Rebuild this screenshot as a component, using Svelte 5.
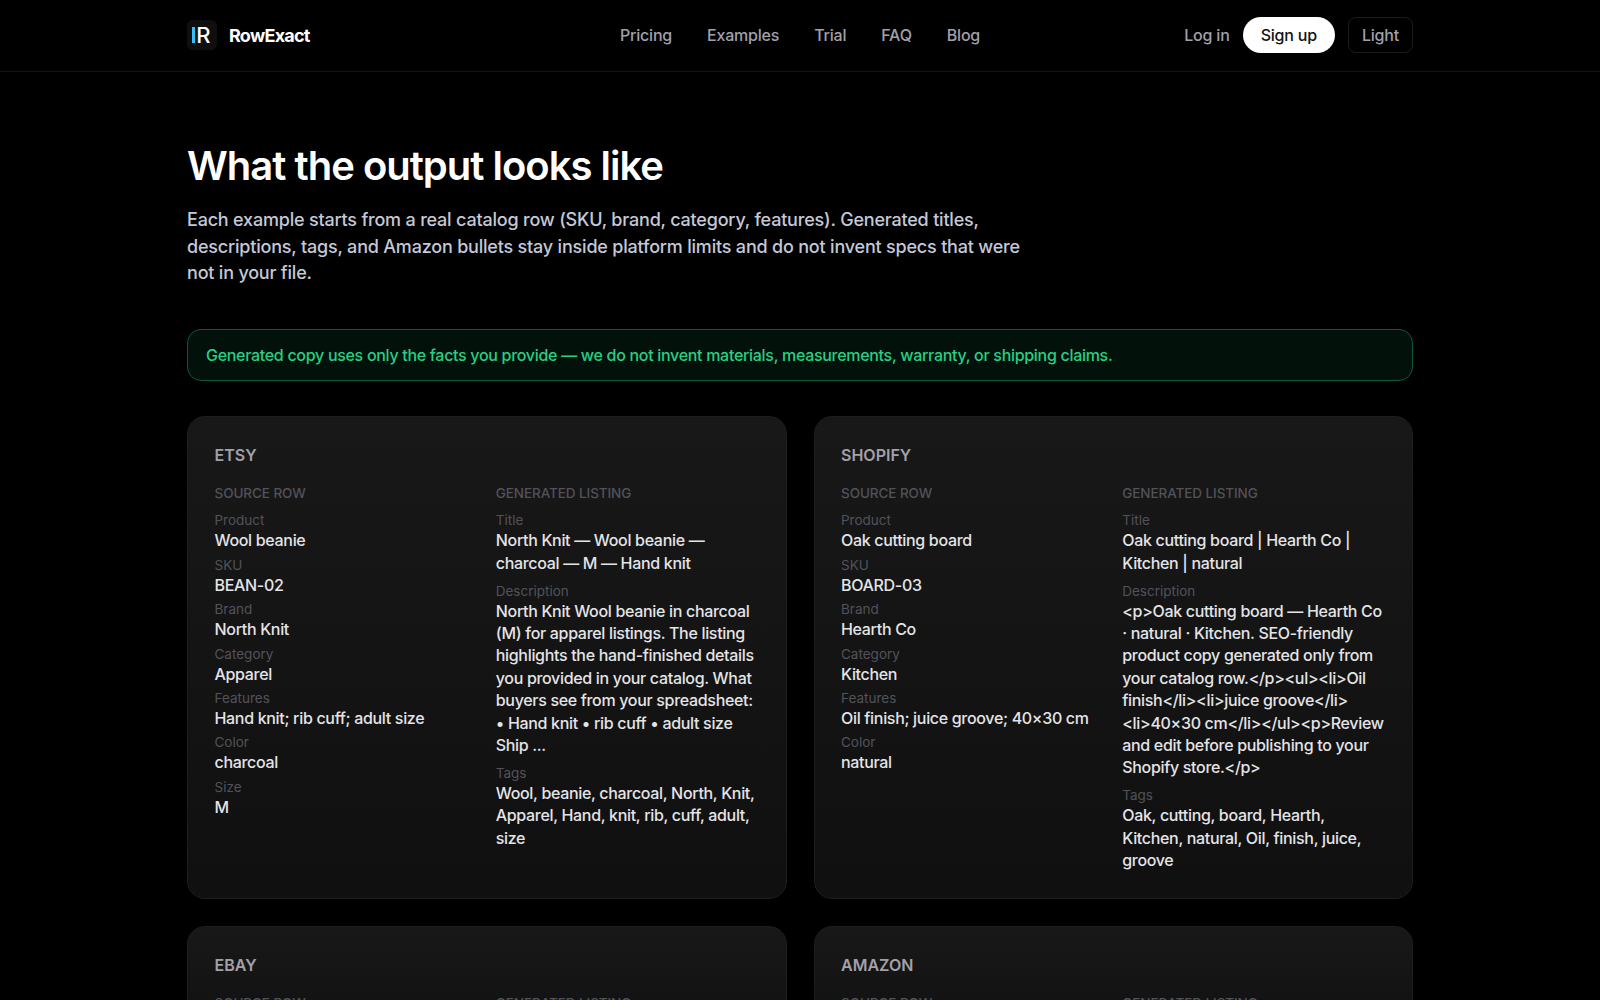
<script>
  const navLinks = ['Pricing', 'Examples', 'Trial', 'FAQ', 'Blog'];

  const examples = [
    {
      platform: 'Etsy',
      source: [
        ['Product', 'Wool beanie'],
        ['SKU', 'BEAN-02'],
        ['Brand', 'North Knit'],
        ['Category', 'Apparel'],
        ['Features', 'Hand knit; rib cuff; adult size'],
        ['Color', 'charcoal'],
        ['Size', 'M']
      ],
      output: [
        ['Title', 'North Knit — Wool beanie — charcoal — M — Hand knit'],
        ['Description', 'North Knit Wool beanie in charcoal (M) for apparel listings. The listing highlights the hand-finished details you provided in your catalog. What buyers see from your spreadsheet: • Hand knit • rib cuff • adult size Ship ...'],
        ['Tags', 'Wool, beanie, charcoal, North, Knit, Apparel, Hand, knit, rib, cuff, adult, size']
      ]
    },
    {
      platform: 'Shopify',
      source: [
        ['Product', 'Oak cutting board'],
        ['SKU', 'BOARD-03'],
        ['Brand', 'Hearth Co'],
        ['Category', 'Kitchen'],
        ['Features', 'Oil finish; juice groove; 40×30 cm'],
        ['Color', 'natural']
      ],
      output: [
        ['Title', 'Oak cutting board | Hearth Co | Kitchen | natural'],
        ['Description', '<p>Oak cutting board — Hearth Co · natural · Kitchen. SEO-friendly product copy generated only from your catalog row.</p><ul><li>Oil finish</li><li>juice groove</li><li>40×30 cm</li></ul><p>Review and edit before publishing to your Shopify store.</p>'],
        ['Tags', 'Oak, cutting, board, Hearth, Kitchen, natural, Oil, finish, juice, groove']
      ]
    },
    { platform: 'eBay', source: [], output: [] },
    { platform: 'Amazon', source: [], output: [] }
  ];
</script>

<div class="page">
  <header class="topbar">
    <div class="topbar-inner">
      <a class="brand" href="#home">
        <span class="logo">
          <svg viewBox="0 0 30 30" width="30" height="30" aria-hidden="true">
            <rect x="5" y="7" width="3" height="16" fill="#38bdf8" />
            <text x="9.2" y="23" class="logo-r">R</text>
          </svg>
        </span>
        RowExact
      </a>
      <nav class="nav">
        {#each navLinks as link}
          <a href="#{link.toLowerCase()}">{link}</a>
        {/each}
      </nav>
      <div class="actions">
        <a class="login" href="#login">Log in</a>
        <button class="signup">Sign up</button>
        <button class="theme">Light</button>
      </div>
    </div>
  </header>

  <main class="content">
    <h1>What the output looks like</h1>
    <p class="intro">
      Each example starts from a real catalog row (SKU, brand, category, features). Generated titles, descriptions, tags, and Amazon bullets stay inside platform limits and do not invent specs that were not in your file.
    </p>

    <div class="notice">
      Generated copy uses only the facts you provide — we do not invent materials, measurements, warranty, or shipping claims.
    </div>

    <div class="grid">
      {#each examples as ex}
        <section class="card">
          <h2>{ex.platform}</h2>
          <div class="columns">
            <div>
              <h3>Source row</h3>
              {#each ex.source as [label, value]}
                <div class="field">
                  <span class="label">{label}</span>
                  <span class="value">{value}</span>
                </div>
              {/each}
            </div>
            <div>
              <h3>Generated listing</h3>
              {#each ex.output as [label, value]}
                <div class="field output">
                  <span class="label">{label}</span>
                  <span class="value">{value}</span>
                </div>
              {/each}
            </div>
          </div>
        </section>
      {/each}
    </div>
  </main>
</div>

<style>
  :global(body) {
    background: #000;
    color: #fff;
    font-family: Inter, "Liberation Sans", sans-serif;
  }

  .topbar {
    border-bottom: 1px solid #141414;
  }

  .topbar-inner {
    width: 1226px;
    height: 70px;
    padding-bottom: 1px;
    margin: 0 auto;
    display: grid;
    grid-template-columns: 1fr auto 1fr;
    align-items: center;
  }

  .brand {
    display: flex;
    align-items: center;
    gap: 12px;
    color: #fff;
    font-size: 18px;
    font-weight: 700;
    letter-spacing: -0.75px;
    text-decoration: none;
  }

  .logo {
    width: 30px;
    height: 30px;
    background: #0f0f0f;
    border-radius: 6px;
  }

  .logo-r {
    fill: #fff;
    font-size: 22px;
    font-weight: 500;
  }

  .nav {
    display: flex;
    gap: 35px;
  }

  .nav a,
  .login {
    color: #a1a1aa;
    font-size: 16px;
    font-weight: 500;
    letter-spacing: -0.2px;
    text-decoration: none;
  }

  .actions {
    display: flex;
    align-items: center;
    justify-content: flex-end;
  }

  .signup {
    height: 36px;
    margin-left: 13px;
    padding: 0 18px;
    background: #fff;
    border: 0;
    border-radius: 18px;
    color: #111;
    font: 500 16px Inter, sans-serif;
    letter-spacing: -0.2px;
  }

  .theme {
    height: 36px;
    margin-left: 13px;
    padding: 0 13px;
    background: #000;
    border: 1px solid #1c1c1c;
    border-radius: 8px;
    color: #a1a1aa;
    font: 500 16px Inter, sans-serif;
    letter-spacing: -0.2px;
  }

  .content {
    width: 1226px;
    margin: 0 auto;
    padding-top: 71px;
  }

  h1 {
    margin: 0;
    font-size: 40px;
    line-height: 46px;
    font-weight: 600;
    letter-spacing: -1px;
  }

  .intro {
    max-width: 840px;
    margin: 18px 0 0;
    color: #c4c8d8;
    font-size: 18px;
    font-weight: 450;
    line-height: 26.6px;
    letter-spacing: -0.2px;
  }

  .notice {
    margin-top: 42px;
    padding: 14px 18px;
    background: #03110b;
    border: 1px solid #0c5a3c;
    border-radius: 14px;
    color: #25d084;
    font-size: 16px;
    font-weight: 450;
    line-height: 22px;
    letter-spacing: -0.3px;
  }

  .grid {
    display: grid;
    grid-template-columns: 1fr 1fr;
    gap: 27px;
    margin-top: 35.5px;
  }

  .card {
    padding: 28px 26.5px 26px;
    background: linear-gradient(180deg, #181818, #101010);
    border: 1px solid #1e1e1e;
    border-radius: 18px;
  }

  h2 {
    margin: 0 0 20px;
    color: #a1a1aa;
    font-size: 16px;
    font-weight: 600;
    text-transform: uppercase;
  }

  .columns {
    display: grid;
    grid-template-columns: 1fr 1fr;
    gap: 18px;
  }

  h3 {
    margin: 0 0 10px;
    color: #52525b;
    font-size: 13.5px;
    font-weight: 500;
    letter-spacing: -0.08px;
    text-transform: uppercase;
  }

  .field {
    display: flex;
    flex-direction: column;
    margin-bottom: 4px;
  }

  .field.output {
    margin-bottom: 7.5px;
  }

  .field.output:last-child {
    margin-bottom: 0;
  }

  .label {
    color: #52525b;
    font-size: 13.5px;
    line-height: 18px;
  }

  .value {
    color: #e4e4e7;
    font-size: 16px;
    font-weight: 450;
    line-height: 22.4px;
    letter-spacing: -0.32px;
  }
</style>
